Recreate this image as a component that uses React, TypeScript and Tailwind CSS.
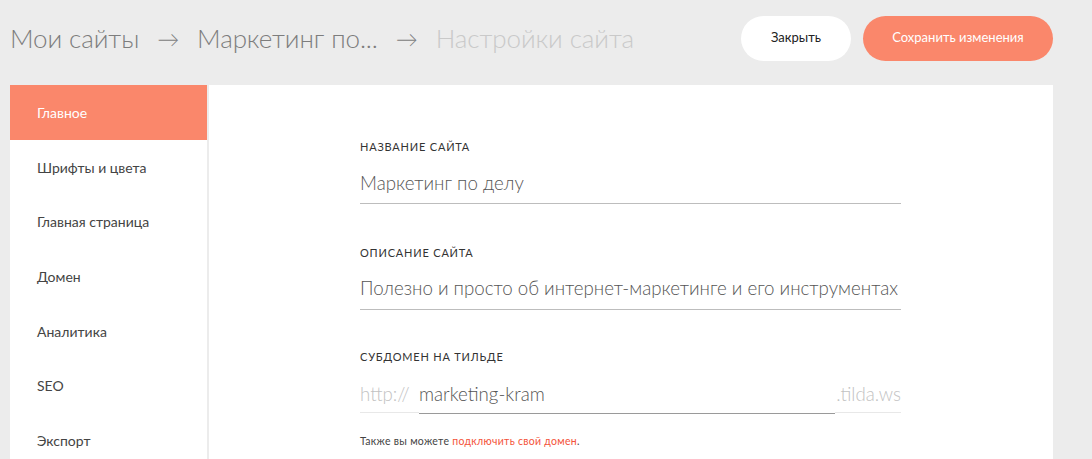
import React from "react";

const items = ["Главное", "Шрифты и цвета", "Главная страница", "Домен", "Аналитика", "SEO", "Экспорт"];

export default function App() {
  return (
    <div className="w-[1092px] h-[459px] overflow-hidden bg-[#ececec] font-['Lato','Noto_Sans',sans-serif]">
      <div className="flex items-center h-[85px] pl-[10px] pr-[39px]">
        <div className="flex items-center gap-[18px] text-[26px] font-light text-[#7d7d7d] tracking-[-0.1px] pb-[9px]">
          <span>Мои сайты</span>
          <span className="text-[22px]">→</span>
          <span>Маркетинг по...</span>
          <span className="text-[22px]">→</span>
          <span className="text-[#c9c9c9]">Настройки сайта</span>
        </div>
        <div className="ml-auto flex items-center gap-[12px] pb-[9px]">
          <button className="w-[110px] h-[45px] rounded-full bg-white text-[13px] text-[#222]">Закрыть</button>
          <button className="w-[190px] h-[45px] rounded-full bg-[#fa876b] text-[13px] text-white">Сохранить изменения</button>
        </div>
      </div>
      <div className="flex gap-[2px] pl-[10px] pr-[39px]">
        <div className="w-[197px] bg-white h-[400px] shrink-0">
          {items.map((t, i) => (
            <div
              key={t}
              className={
                i === 0
                  ? "h-[55px] flex items-center pl-[27px] text-[14px] bg-[#fa876b] text-white"
                  : "h-[54.6px] flex items-center pl-[27px] text-[14px] text-[#444]"
              }
            >
              {t}
            </div>
          ))}
        </div>
        <div className="flex-1 bg-white h-[400px] pl-[151px] pt-[54px]">
          <div className="w-[541px]">
            <div className="text-[11px] leading-[16px] uppercase tracking-[0.8px] text-[#333]">Название сайта</div>
            <div className="mt-[14px] text-[18.7px] leading-[28px] font-light text-[#555] pb-[6px] border-b border-[#bdbdbd] whitespace-nowrap">Маркетинг по делу</div>
            <div className="mt-[41px] text-[11px] leading-[16px] uppercase tracking-[0.8px] text-[#333]">Описание сайта</div>
            <div className="mt-[13px] text-[18.7px] leading-[28px] font-light text-[#555] pb-[7px] border-b border-[#bdbdbd] whitespace-nowrap">Полезно и просто об интернет-маркетинге и его инструментах</div>
            <div className="mt-[39px] text-[11px] leading-[16px] uppercase tracking-[0.8px] text-[#333]">Субдомен на тильде</div>
            <div className="mt-[15px] flex text-[18.7px] leading-[28px] font-light whitespace-nowrap">
              <span className="w-[59px] pb-[4px] border-b border-[#e8e8e8] text-[#c2c2c2]">http://</span>
              <span className="flex-1 pb-[5px] border-b border-[#9a9a9a] text-[#555] mb-[-1px]">marketing-kram</span>
              <span className="w-[66px] pb-[4px] border-b border-[#e8e8e8] text-[#c2c2c2] text-right">.tilda.ws</span>
            </div>
            <div className="mt-[21px] text-[10.5px] leading-[14px] tracking-[0.3px] text-[#444]">
              Также вы можете <span className="text-[#f4533a]">подключить свой домен</span>.
            </div>
          </div>
        </div>
      </div>
    </div>
  );
}
